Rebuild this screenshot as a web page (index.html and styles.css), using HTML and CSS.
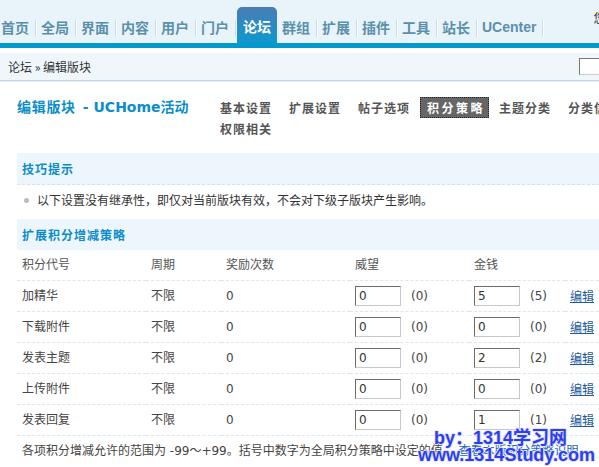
FILE: index.html
```html
<!DOCTYPE html>
<html lang="zh-CN">
<head>
<meta charset="utf-8">
<title>编辑版块</title>
<link rel="stylesheet" href="styles.css">
</head>
<body>
<div class="page">
  <header class="topbar">
    <nav class="nav">
      <a class="nav-item first">首页</a><span class="sep"></span>
      <a class="nav-item">全局</a><span class="sep"></span>
      <a class="nav-item">界面</a><span class="sep"></span>
      <a class="nav-item">内容</a><span class="sep"></span>
      <a class="nav-item">用户</a><span class="sep"></span>
      <a class="nav-item">门户</a><span class="sep"></span>
      <a class="nav-item active">论坛</a>
      <a class="nav-item">群组</a><span class="sep"></span>
      <a class="nav-item">扩展</a><span class="sep"></span>
      <a class="nav-item">插件</a><span class="sep"></span>
      <a class="nav-item">工具</a><span class="sep"></span>
      <a class="nav-item">站长</a><span class="sep"></span>
      <a class="nav-item latin">UCenter</a><span class="sep"></span>
    </nav>
    <div class="userinfo">您好，admin</div>
  </header>
  <div class="bluebar"></div>
  <div class="crumbbar">
    <span class="crumb">论坛 &raquo; 编辑版块</span>
    <input class="search" type="text">
  </div>

  <main class="main">
    <div class="titlerow">
      <h1 class="title"><span class="title-cn">编辑版块</span><span class="title-sub">- UCHome活动</span></h1>
      <ul class="tabs">
        <li class="tab">基本设置</li>
        <li class="tab">扩展设置</li>
        <li class="tab">帖子选项</li>
        <li class="tab current">积分策略</li>
        <li class="tab">主题分类</li>
        <li class="tab">分类信息</li>
        <li class="tab">权限相关</li>
      </ul>
    </div>

    <h3 class="sec-head tips-head">技巧提示</h3>
    <ul class="tips">
      <li class="tip">以下设置没有继承性，即仅对当前版块有效，不会对下级子版块产生影响。</li>
    </ul>

    <h3 class="sec-head">扩展积分增减策略</h3>
    <table class="credits">
      <colgroup>
        <col class="c1"><col class="c2"><col class="c3"><col class="c4"><col class="c5"><col class="c6">
      </colgroup>
      <tr class="head">
        <td>积分代号</td><td>周期</td><td>奖励次数</td><td>威望</td><td>金钱</td><td></td>
      </tr>
      <tr>
        <td>加精华</td><td>不限</td><td>0</td>
        <td><input class="num" type="text" value="0"><span class="def">(0)</span></td>
        <td><input class="num" type="text" value="5"><span class="def">(5)</span></td>
        <td><a class="edit">编辑</a></td>
      </tr>
      <tr>
        <td>下载附件</td><td>不限</td><td>0</td>
        <td><input class="num" type="text" value="0"><span class="def">(0)</span></td>
        <td><input class="num" type="text" value="0"><span class="def">(0)</span></td>
        <td><a class="edit">编辑</a></td>
      </tr>
      <tr>
        <td>发表主题</td><td>不限</td><td>0</td>
        <td><input class="num" type="text" value="0"><span class="def">(0)</span></td>
        <td><input class="num" type="text" value="2"><span class="def">(2)</span></td>
        <td><a class="edit">编辑</a></td>
      </tr>
      <tr>
        <td>上传附件</td><td>不限</td><td>0</td>
        <td><input class="num" type="text" value="0"><span class="def">(0)</span></td>
        <td><input class="num" type="text" value="0"><span class="def">(0)</span></td>
        <td><a class="edit">编辑</a></td>
      </tr>
      <tr>
        <td>发表回复</td><td>不限</td><td>0</td>
        <td><input class="num" type="text" value="0"><span class="def">(0)</span></td>
        <td><input class="num" type="text" value="1"><span class="def">(1)</span></td>
        <td><a class="edit">编辑</a></td>
      </tr>
      <tr class="foot">
        <td colspan="6">各项积分增减允许的范围为 -99～+99。括号中数字为全局积分策略中设定的值。 <a class="more">查看本版积分策略说明</a></td>
      </tr>
    </table>
  </main>

  <div class="watermark">
    <div class="wm1">by：1314学习网</div>
    <div class="wm2">www.1314Study.com</div>
  </div>
</div>
</body>
</html>
```

FILE: styles.css
```css
html, body {
  margin: 0;
  padding: 0;
  overflow: hidden;
  background: #fff;
}
body {
  font-family: "DejaVu Sans", "Noto Sans CJK SC", sans-serif;
  font-size: 12px;
  line-height: 1.5;
  color: #333;
}
.page {
  width: 700px;
  position: relative;
}

/* top navigation */
.topbar {
  display: flex;
  height: 43px;
  background: #e8f3fa;
}
.nav {
  display: flex;
  align-items: flex-end;
  height: 43px;
}
.nav-item {
  box-sizing: border-box;
  height: 36px;
  padding: 11px 6px 0 5px;
  line-height: 18px;
  font-family: "Noto Sans CJK SC", sans-serif;
  font-size: 14px;
  font-weight: bold;
  color: #5b90aa;
  white-space: nowrap;
}
.nav-item.first {
  padding-left: 1px;
}
.nav-item.latin {
  font-family: "Liberation Sans", sans-serif;
}
.nav-item.active {
  padding: 10px 6px 0 6px;
  margin-left: 1px;
  color: #fff;
  border-radius: 5px 5px 0 0;
  background: linear-gradient(#4a7db6, #0d98cf);
}
.sep {
  width: 1px;
  height: 17px;
  margin-bottom: 6px;
  background: #ccdce6;
  box-shadow: 1px 0 0 #fbfdff;
}
.userinfo {
  margin: 11px 0 0 50px;
  line-height: 14px;
  white-space: nowrap;
  color: #333;
  font-family: "Noto Sans CJK SC", sans-serif;
}
.bluebar {
  height: 5px;
  background: #0499cc;
  border-bottom: 5px solid #fff;
}

/* breadcrumb */
.crumbbar {
  display: flex;
  align-items: center;
  height: 27px;
  padding-left: 8px;
  background: #eff7fb;
  border-bottom: 1px solid #c4d5df;
  box-shadow: 0 1px 0 #e4eef4;
}
.crumb {
  color: #333;
  font-family: "Noto Sans CJK SC", sans-serif;
}
.search {
  box-sizing: border-box;
  width: 110px;
  height: 17px;
  margin: 0 0 0 auto;
  margin-right: 11px;
  padding: 0;
  border: 1px solid;
  border-color: #777 #ccc #ccc #777;
  background: #fff;
}

/* main */
.main {
  padding: 16px 0 0 17px;
}
.titlerow {
  display: flex;
  align-items: flex-start;
}
.title {
  width: 196px;
  flex: none;
  margin: 0;
  font-size: 14px;
  font-weight: bold;
  line-height: 21px;
  color: #0b8dc9;
  white-space: nowrap;
}
.title-cn {
  letter-spacing: 0.7px;
}
.title-sub {
  margin-left: 7px;
}
.tabs {
  display: flex;
  flex-wrap: wrap;
  max-width: 440px;
  margin: 0;
  padding: 0;
  list-style: none;
}
.tab {
  height: 19px;
  margin-right: 3px;
  padding: 0 6px;
  border: 1px solid transparent;
  line-height: 19px;
  font-weight: bold;
  letter-spacing: 1px;
  color: #555;
  font-family: "Noto Sans CJK SC", sans-serif;
  white-space: nowrap;
}
.tab.current {
  background: #666;
  color: #fff;
  border: 1px dotted #222;
  letter-spacing: 2.5px;
  padding: 0 3px 0 6px;
}

/* section headers */
.sec-head {
  height: 31px;
  margin: 0;
  padding-left: 5px;
  line-height: 31px;
  background: #edf6fc;
  color: #0b8dc9;
  font-size: 12px;
  font-weight: bold;
  letter-spacing: 1px;
  font-family: "Noto Sans CJK SC", sans-serif;
}
.tips-head {
  margin-top: 14px;
  border-bottom: 1px dashed #d2e3ee;
}
.tips {
  margin: 0;
  padding: 5px 0 9px 0;
  list-style: none;
}
.tip {
  display: flex;
  align-items: center;
  line-height: 20px;
  color: #333;
  font-family: "Noto Sans CJK SC", sans-serif;
}
.tip::before {
  content: "";
  width: 5px;
  height: 5px;
  margin: 0 8px 0 7px;
  border-radius: 50%;
  background: #bbb;
}

/* table */
.credits {
  width: 683px;
  border-collapse: collapse;
  table-layout: fixed;
}
.c1 { width: 129px; }
.c2 { width: 75px; }
.c3 { width: 129px; }
.c4 { width: 119px; }
.c5 { width: 96px; }
.credits td {
  height: 30px;
  padding: 0 5px;
  border-bottom: 1px dashed #d8e7f2;
  color: #444;
  white-space: nowrap;
  vertical-align: middle;
}
.credits tr.head td {
  color: #555;
}
.credits tr.foot td {
  border-bottom: none;
  color: #444;
}
.num {
  box-sizing: border-box;
  width: 46px;
  height: 20px;
  margin: 0;
  padding: 0 3px;
  border: 1px solid;
  border-color: #6b6b6b #c8c8c8 #c8c8c8 #6b6b6b;
  font-family: "DejaVu Sans", sans-serif;
  font-size: 12px;
  color: #333;
  vertical-align: middle;
}
.def {
  margin-left: 10px;
  color: #444;
  vertical-align: middle;
}
.edit {
  color: #1f5b9a;
  text-decoration: underline;
  font-family: "Noto Sans CJK SC", sans-serif;
}
.more {
  color: #2266b4;
}

/* watermark overlay */
.watermark {
  position: absolute;
  left: 418px;
  top: 430px;
  font-family: "Liberation Sans", "Noto Sans CJK SC", sans-serif;
  font-size: 18px;
  font-weight: bold;
  line-height: 17px;
  color: #2d3ef0;
  text-shadow: 1px 0 0 #dfe3ff, -1px 0 0 #dfe3ff, 0 1px 0 #dfe3ff, 0 -1px 0 #dfe3ff;
  white-space: nowrap;
}
.wm1 {
  margin-left: 16px;
}
```
